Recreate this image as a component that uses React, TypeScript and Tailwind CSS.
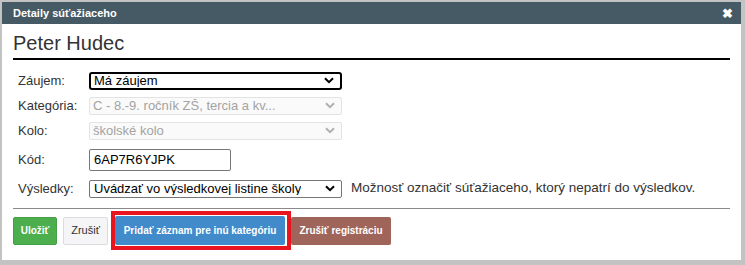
import React from 'react'

const Chevron = ({ color }: { color: string }) => (
    <svg width="10" height="7" viewBox="0 0 10 7" className="shrink-0">
        <path d="M1 1.2 L5 5.2 L9 1.2" fill="none" stroke={color} strokeWidth="2" />
    </svg>
)

const FakeSelect = ({
    value,
    variant,
}: {
    value: string
    variant: 'focus' | 'disabled' | 'normal'
}) => {
    const box =
        variant === 'focus'
            ? 'border-2 border-black rounded-[3px] text-black pl-[3px]'
            : variant === 'disabled'
              ? 'border border-[#e3e3e3] rounded-[2px] bg-[#fafafa] text-[#a3a3a3] pl-[3px]'
              : 'border border-[#767676] rounded-[2px] text-black pl-[4px]'
    return (
        <div className={`w-[253px] h-[18px] flex items-center justify-between pr-[6px] leading-none ${box}`}>
            <span className="truncate">{value}</span>
            <Chevron color={variant === 'disabled' ? '#b0b0b0' : '#000'} />
        </div>
    )
}

const App = () => {
    return (
        <div className="w-[745px] h-[265px] bg-[#c3c3c3] pt-[2px] pl-[2px] font-['Liberation_Sans',Arial,sans-serif] text-[13px] text-[#333]">
            <div className="w-[739px] h-[258px] bg-white flex flex-col">
                {/* Header */}
                <div className="h-[22px] bg-[#465a65] flex items-center justify-between pl-[11px] pr-[8px]">
                    <span className="text-white font-bold text-[11px]">Detaily súťažiaceho</span>
                    <span className="text-white font-bold text-[13px] leading-none">✖</span>
                </div>

                <div className="px-[11px]">
                    <h2 className="text-[20px] leading-[24px] text-[#333] pt-[7px] pb-[3px] border-b-2 border-black">
                        Peter Hudec
                    </h2>

                    {/* Form */}
                    <div className="mt-[8px] pl-[5px]">
                        <div className="h-[25px] flex items-center">
                            <div className="w-[71px]">Záujem:</div>
                            <FakeSelect value="Má záujem" variant="focus" />
                        </div>
                        <div className="h-[25px] flex items-center">
                            <div className="w-[71px]">Kategória:</div>
                            <FakeSelect value="C - 8.-9. ročník ZŠ, tercia a kv..." variant="disabled" />
                        </div>
                        <div className="h-[25px] flex items-center">
                            <div className="w-[71px]">Kolo:</div>
                            <FakeSelect value="školské kolo" variant="disabled" />
                        </div>
                        <div className="h-[33px] flex items-center">
                            <div className="w-[71px]">Kód:</div>
                            <div className="w-[142px] h-[22px] border border-[#767676] rounded-[2px] flex items-center pl-[4px] text-black">
                                6AP7R6YJPK
                            </div>
                        </div>
                        <div className="h-[25px] flex items-center">
                            <div className="w-[71px]">Výsledky:</div>
                            <FakeSelect value="Uvádzať vo výsledkovej listine školy" variant="normal" />
                            <span className="ml-[9px] text-[13.5px]">Možnosť označiť súťažiaceho, ktorý nepatrí do výsledkov.</span>
                        </div>
                    </div>

                    <div className="mt-[7px] border-t border-[#8a8a8a]" />

                    {/* Buttons */}
                    <div className="mt-[2px] flex items-center text-[10px]">
                        <button className="h-[28px] w-[44px] bg-[#4cae4c] border border-[#45a045] rounded-[2px] text-white font-bold">
                            Uložiť
                        </button>
                        <button className="ml-[6px] h-[28px] w-[45px] bg-[#f5f5f7] border border-[#dcdcdc] rounded-[2px] text-[#333] text-[11px]">
                            Zrušiť
                        </button>
                        <div className="ml-[3px] border-4 border-[#e8141e] pr-[2px] py-[1px]">
                            <button className="h-[29px] w-[170px] bg-[#428bca] rounded-[2px] text-white font-bold">
                                Pridať záznam pre inú kategóriu
                            </button>
                        </div>
                        <button className="h-[28px] w-[100px] bg-[#a0655a] rounded-[2px] text-white font-bold">
                            Zrušiť registráciu
                        </button>
                    </div>
                </div>
            </div>
        </div>
    )
}

export default App
